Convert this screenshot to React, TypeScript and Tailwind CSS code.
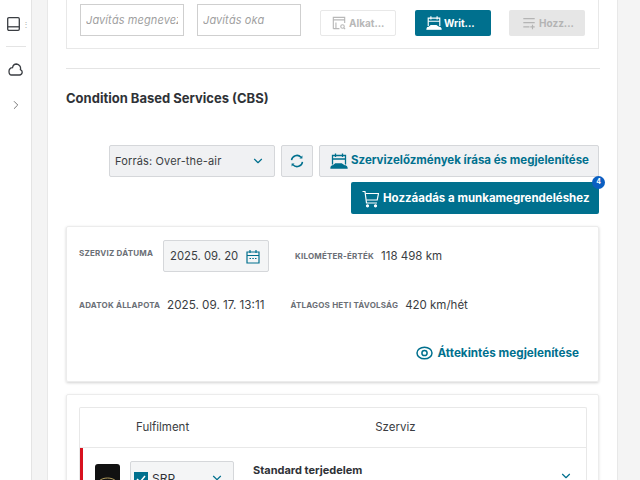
import { ChevronDown, ChevronRight } from 'lucide-react';

const sans = { fontFamily: 'Inter, "Noto Sans", sans-serif' };

function BookIcon() {
  return (
    <svg width="13" height="14" viewBox="0 0 13 14" fill="none" stroke="currentColor" strokeWidth="1.3">
      <rect x="0.7" y="0.7" width="11.6" height="12.6" rx="1.2" />
      <path d="M0.7 9.800h11.600" />
    </svg>
  );
}

function CloudIcon() {
  return (
    <svg width="15" height="13" viewBox="0 0 15 13" fill="none" stroke="currentColor" strokeWidth="1.3">
      <path d="M3.500 12h8a2.800 2.800 0 0 0 .9-5.400A4.400 4.400 0 0 0 8.500 1C6.300 1 5 2.400 4.500 4.700 2.400 4.600 1 6.300 1 8.200 1 10.400 2 12 3.500 12z" />
    </svg>
  );
}

function SyncIcon() {
  return (
    <svg width="14" height="14" viewBox="0 0 14 14" fill="none" stroke="currentColor" strokeWidth="1.500">
      <path d="M1.500 6.200A5.500 5.500 0 0 1 11 3.200M12.500 7.800A5.500 5.500 0 0 1 3 10.800" />
      <path d="M12.400 1.600v2.900H9.500zM1.600 12.400V9.500h2.900z" fill="currentColor" stroke="none" />
    </svg>
  );
}

function CarCalendar({ size = 18 }: { size?: number }) {
  return (
    <svg width={size} height={size} viewBox="0 0 18 18" fill="none" stroke="currentColor" strokeWidth="1.300">
      <path d="M2.500 12.500V3.500h13v9" />
      <path d="M2.500 7h13M5.500 1.500v3.500M12.500 1.500v3.500" />
      <path d="M1 16c0-1.600 1-2.200 2.500-2.400L5.500 12h6l2.500 1.600c1.600.2 3 .8 3 2.400H1z" fill="currentColor" />
    </svg>
  );
}

function CartIcon() {
  return (
    <svg width="17" height="18" viewBox="0 0 17 18" fill="none" stroke="currentColor" strokeWidth="1.200">
      <path d="M0.500 1.500h2.500l1.500 11.500h10.500" />
      <path d="M3.500 3.500h13l-1.300 6.500H4.300" />
      <circle cx="5.500" cy="15.800" r="1" fill="currentColor" />
      <circle cx="13.500" cy="15.800" r="1" fill="currentColor" />
    </svg>
  );
}

function CalendarIcon() {
  return (
    <svg width="14" height="15" viewBox="0 0 14 15" fill="none" stroke="currentColor" strokeWidth="1.200" className="text-[#00708e]">
      <path d="M1 3h12v11H1zM1 6.500h12M4 1v3M10 1v3" />
      <path d="M3.500 9.500h1.500M6.300 9.500h1.500M9 9.500h1.500" />
    </svg>
  );
}

function ReportSearch() {
  return (
    <svg width="14" height="14" viewBox="0 0 16 16" fill="none" stroke="currentColor" strokeWidth="1.300">
      <path d="M1.500 14.500v-13h13V8M1.500 4.500h13M1.500 14.500h7M4.500 7.500v7" />
      <circle cx="12" cy="12" r="2" />
      <path d="M13.500 13.500l1.500 1.500" />
    </svg>
  );
}

function ListAdd() {
  return (
    <svg width="14" height="14" viewBox="0 0 16 16" fill="none" stroke="currentColor" strokeWidth="1.300">
      <path d="M1.500 3h13M1.500 7.500h13M1.500 12.500h7M12 10v5M9.500 12.500h5" />
    </svg>
  );
}

function EyeIcon() {
  return (
    <svg width="17" height="14" viewBox="0 0 17 14" fill="none" stroke="currentColor" strokeWidth="1.500">
      <ellipse cx="8.500" cy="7" rx="7.500" ry="5.800" />
      <circle cx="8.500" cy="7" r="2.600" />
    </svg>
  );
}

function Label({ children, className = '' }: { children: string; className?: string }) {
  return <span className={`text-[8px] leading-3 font-bold tracking-[0.2px] text-[#6b6f76] whitespace-nowrap ${className}`}>{children}</span>;
}

export default function App() {
  return (
    <div className="flex h-[480px] w-[640px] overflow-hidden bg-white text-[#2f3237]" style={sans}>
      <aside className="flex w-8 shrink-0 flex-col items-center border-r border-[#e4e4e4] text-[#3a3d42]">
        <div className="mt-[17px] flex h-[14px] items-center gap-[2px] pl-[5px]">
          <BookIcon />
          <span className="text-[8px] leading-none text-[#aaa]">⋮</span>
        </div>
        <div className="mt-[15px] h-px w-5 bg-[#e4e4e4]" />
        <div className="mt-[16px] flex h-[13px]"><CloudIcon /></div>
        <ChevronRight size={14} strokeWidth={1.500} className="mt-[22px] text-[#666]" />
      </aside>
      <div className="w-4 shrink-0 border-r border-[#e8e8e8] bg-[#f4f4f4]" />

      <main className="flex w-[570px] shrink-0 flex-col border-r border-[#e8e8e8] pl-[18px] pr-[18px]">
        <section className="flex h-[49px] w-[533px] shrink-0 items-start border border-t-0 border-[#e8e8e8] pl-[13px] pt-[4px]">
          <input readOnly placeholder="Javítás megnevezése" className="h-8 w-[104px] border border-[#cfcfcf] px-[5px] text-[11px] italic tracking-[0.1px] outline-none placeholder:text-[#9f9f9f]" />
          <input readOnly placeholder="Javítás oka" className="ml-[13px] h-8 w-[104px] border border-[#cfcfcf] px-[5px] text-[11px] italic tracking-[0.1px] outline-none placeholder:text-[#9f9f9f]" />
          <button className="ml-[19px] mt-[6px] flex h-[26px] w-[76px] items-center gap-[3px] rounded-[2px] border border-[#e8e8e8] pl-[11px] text-[10px] font-bold text-[#b8b8b8]">
            <ReportSearch />
            Alkat...
          </button>
          <button className="ml-[19px] mt-[6px] flex h-[26px] w-[76px] items-center gap-[2px] rounded-[2px] bg-[#00708e] pl-[11px] text-[10px] font-bold text-white">
            <CarCalendar size={16} />
            Writ...
          </button>
          <button className="ml-[18px] mt-[6px] flex h-[26px] w-[76px] items-center gap-[3px] rounded-[2px] bg-[#e6e6e6] pl-[13px] text-[10px] font-bold text-[#b4b4b4]">
            <ListAdd />
            Hozz...
          </button>
        </section>

        <div className="mt-[19px] h-px w-[534px] shrink-0 bg-[#e4e4e4]" />
        <h2 className="mt-[20px] shrink-0 text-[13px] font-bold leading-[18px] text-[#2f3237]">Condition Based Services (CBS)</h2>

        <div className="mt-[38px] flex w-[533px] shrink-0 justify-end gap-[6px]">
          <button className="flex h-8 w-[166px] items-center justify-between rounded-[2px] border border-[#d5d7da] bg-[#f0f1f3] pl-[5px] pr-[9px] text-[11px] tracking-[0.15px] text-[#3a3d42]">
            Forrás: Over-the-air
            <ChevronDown size={14} strokeWidth={2} className="text-[#00708e]" />
          </button>
          <button className="flex h-8 w-8 items-center justify-center rounded-[2px] border border-[#d5d7da] bg-[#f0f1f3] text-[#00708e]">
            <SyncIcon />
          </button>
          <button className="flex h-8 w-[280px] items-center gap-[3px] rounded-[2px] border border-[#d5d7da] bg-[#f0f1f3] pl-[10px] text-[11.500px] font-bold text-[#00708e]">
            <CarCalendar />
            Szervizelőzmények írása és megjelenítése
          </button>
        </div>
        <div className="mt-[5px] flex w-[533px] shrink-0 justify-end">
          <button className="relative flex h-8 w-[248px] items-center gap-[4px] rounded-[2px] bg-[#00708e] pl-[11px] pt-px text-[11.500px] font-bold text-white">
            <CartIcon />
            Hozzáadás a munkamegrendeléshez
            <span className="absolute right-[-6px] top-[-6px] flex h-[13px] w-[13px] items-center justify-center rounded-full bg-[#0a5fc2] text-[7px] font-bold">4</span>
          </button>
        </div>

        <section className="mt-3 h-[156px] w-[533px] shrink-0 rounded-[2px] border border-[#ececec] px-3 shadow-[0_1px_3px_rgba(0,0,0,0.18)]">
          <div className="mt-[13px] flex items-center">
            <Label className="-mt-[6px] w-[84px]">SZERVIZ DÁTUMA</Label>
            <div className="flex h-8 w-[106px] items-center justify-between rounded-[2px] border border-[#d5d7da] bg-[#f4f5f6] pl-[6px] pr-[8px] text-[11.300px] text-[#3a3d42]">
              2025. 09. 20
              <CalendarIcon />
            </div>
            <Label className="ml-[26px]">KILOMÉTER-ÉRTÉK</Label>
            <span className="ml-[7px] pt-px text-[11.500px] text-[#3a3d42]">118 498 km</span>
          </div>
          <div className="mt-[24px] flex items-center">
            <Label className="w-[88px]">ADATOK ÁLLAPOTA</Label>
            <span className="pt-px text-[11.700px] text-[#3a3d42]">2025. 09. 17. 13:11</span>
            <Label className="ml-[26px]">ÁTLAGOS HETI TÁVOLSÁG</Label>
            <span className="ml-[7px] pt-px text-[11.500px] text-[#3a3d42]">420 km/hét</span>
          </div>
          <div className="mt-[30px] flex items-center justify-end gap-[4px] pr-[7px] text-[11.700px] font-bold text-[#00708e]">
            <EyeIcon />
            Áttekintés megjelenítése
          </div>
        </section>

        <section className="mt-3 w-[533px] shrink-0 rounded-[2px] border border-[#ececec] px-3 pt-3 shadow-[0_1px_3px_rgba(0,0,0,0.12)]">
          <div className="w-[508px] rounded-t-[2px] border border-b-0 border-[#e8e8e8]">
            <div className="flex h-10 items-center border-b border-[#e8e8e8] text-[11.500px] text-[#3a3d42]">
              <span className="ml-[56px]">Fulfilment</span>
              <span className="ml-[186px]">Szerviz</span>
            </div>
            <div className="flex h-[60px] border-l-[3px] border-[#d8121f]">
              <div className="ml-[12px] mt-4 h-10 w-[25px] rounded-[3px] bg-[#111]">
                <svg width="25" height="24" viewBox="0 0 25 24" fill="none" stroke="#b09a5a" strokeWidth="1">
                  <path d="M4 17c4-4 13-4 17 0" />
                </svg>
              </div>
              <div className="ml-[10px] mt-[13px] flex h-10 w-[104px] items-start justify-between rounded-[2px] border border-[#d5d7da] bg-[#f4f5f6] pl-[3px] pr-[9px] pt-[8px] text-[12px]">
                <span className="flex items-center gap-1">
                  <span className="flex h-[14px] w-[14px] items-center justify-center bg-[#00708e] text-white">
                    <svg width="12" height="12" viewBox="0 0 12 12" fill="none" stroke="currentColor" strokeWidth="1.500">
                      <path d="M2 6l3 3 5-6" />
                    </svg>
                  </span>
                  SRP
                </span>
                <ChevronDown size={14} strokeWidth={2} className="mt-px text-[#00708e]" />
              </div>
              <span className="ml-[19px] mt-[14px] text-[11px] font-bold">Standard terjedelem</span>
              <ChevronDown size={14} strokeWidth={2} className="ml-[197px] mt-[21px] text-[#00708e]" />
            </div>
          </div>
        </section>
      </main>
      <div className="flex-1 bg-[#f4f4f4]" />
    </div>
  );
}
